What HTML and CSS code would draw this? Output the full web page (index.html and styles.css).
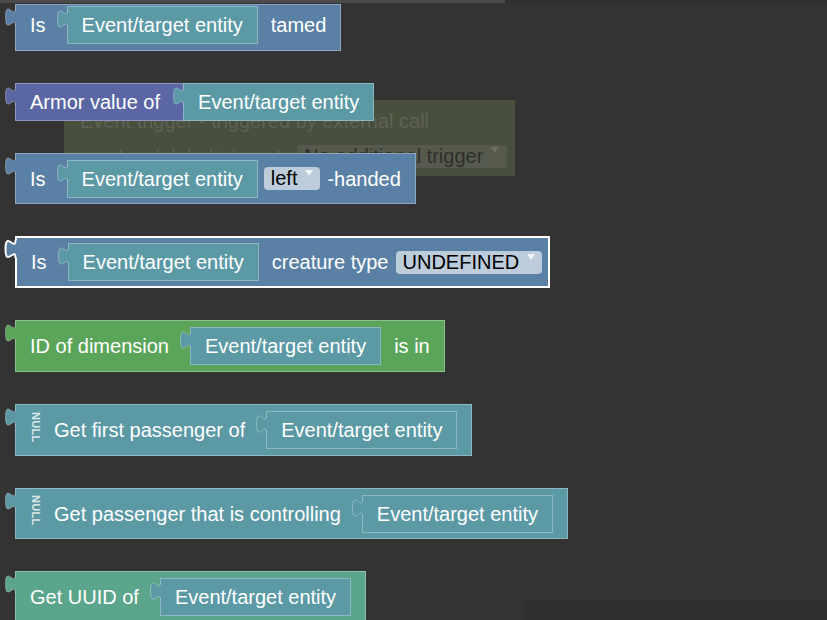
FILE: index.html
```html
<!DOCTYPE html>
<html>
<head>
<meta charset="utf-8">
<link rel="stylesheet" href="styles.css">
</head>
<body>
<div class="scroll-top"><div class="thumb"></div></div>
<div class="scroll-corner"></div>

<div class="ghost">
  <div class="ghost-row">Event trigger - triggered by external call</div>
  <div class="ghost-row two">
    <span>number (global trigger)</span>
    <span class="ghost-dd">No additional trigger<svg class="arrow" width="8" height="6" viewBox="0 0 8 6"><path d="M0 0H8L4 6Z"/></svg></span>
  </div>
</div>

<div class="stack">
  <div class="blk c-blue b1">
    <svg class="tab" width="14" height="26" viewBox="0 0 14 26"><path class="tf" d="M10.5 4c0 12-10-10-10 9s10-3 10 9H13V4Z"/><path class="ts" d="M10.5 4c0 12-10-10-10 9s10-3 10 9"/></svg>
    <span class="lbl">Is</span>
    <div class="inp"><svg class="tab" width="14" height="26" viewBox="0 0 14 26"><path class="tf" d="M10.5 4c0 12-10-10-10 9s10-3 10 9H13V4Z"/><path class="ts" d="M10.5 4c0 12-10-10-10 9s10-3 10 9"/></svg>Event/target entity</div>
    <span class="lbl">tamed</span>
  </div>

  <div class="blk c-purple b2">
    <svg class="tab" width="14" height="26" viewBox="0 0 14 26"><path class="tf" d="M10.5 4c0 12-10-10-10 9s10-3 10 9H13V4Z"/><path class="ts" d="M10.5 4c0 12-10-10-10 9s10-3 10 9"/></svg>
    <span class="lbl">Armor value of</span>
    <div class="inp last"><svg class="tab" width="14" height="26" viewBox="0 0 14 26"><path class="tf" d="M10.5 4c0 12-10-10-10 9s10-3 10 9H13V4Z"/><path class="ts" d="M10.5 4c0 12-10-10-10 9s10-3 10 9"/></svg>Event/target entity</div>
  </div>

  <div class="blk c-blue b3">
    <svg class="tab" width="14" height="26" viewBox="0 0 14 26"><path class="tf" d="M10.5 4c0 12-10-10-10 9s10-3 10 9H13V4Z"/><path class="ts" d="M10.5 4c0 12-10-10-10 9s10-3 10 9"/></svg>
    <span class="lbl">Is</span>
    <div class="inp tight"><svg class="tab" width="14" height="26" viewBox="0 0 14 26"><path class="tf" d="M10.5 4c0 12-10-10-10 9s10-3 10 9H13V4Z"/><path class="ts" d="M10.5 4c0 12-10-10-10 9s10-3 10 9"/></svg>Event/target entity</div>
    <span class="dd">left<svg class="arrow" width="8" height="6" viewBox="0 0 8 6"><path d="M0 0H8L4 6Z"/></svg></span>
    <span class="lbl after-dd">-handed</span>
  </div>

  <div class="blk c-blue b4 selected">
    <svg class="tab" width="14" height="26" viewBox="0 0 14 26"><path class="tf" d="M10.5 4c0 12-10-10-10 9s10-3 10 9H13V4Z"/><path class="ts" d="M10.5 4c0 12-10-10-10 9s10-3 10 9"/></svg>
    <span class="lbl">Is</span>
    <div class="inp"><svg class="tab" width="14" height="26" viewBox="0 0 14 26"><path class="tf" d="M10.5 4c0 12-10-10-10 9s10-3 10 9H13V4Z"/><path class="ts" d="M10.5 4c0 12-10-10-10 9s10-3 10 9"/></svg>Event/target entity</div>
    <span class="lbl">creature type</span>
    <span class="dd gap">UNDEFINED<svg class="arrow" width="8" height="6" viewBox="0 0 8 6"><path d="M0 0H8L4 6Z"/></svg></span>
  </div>

  <div class="blk c-green b5">
    <svg class="tab" width="14" height="26" viewBox="0 0 14 26"><path class="tf" d="M10.5 4c0 12-10-10-10 9s10-3 10 9H13V4Z"/><path class="ts" d="M10.5 4c0 12-10-10-10 9s10-3 10 9"/></svg>
    <span class="lbl">ID of dimension</span>
    <div class="inp"><svg class="tab" width="14" height="26" viewBox="0 0 14 26"><path class="tf" d="M10.5 4c0 12-10-10-10 9s10-3 10 9H13V4Z"/><path class="ts" d="M10.5 4c0 12-10-10-10 9s10-3 10 9"/></svg>Event/target entity</div>
    <span class="lbl">is in</span>
  </div>

  <div class="blk c-teal b6">
    <svg class="tab" width="14" height="26" viewBox="0 0 14 26"><path class="tf" d="M10.5 4c0 12-10-10-10 9s10-3 10 9H13V4Z"/><path class="ts" d="M10.5 4c0 12-10-10-10 9s10-3 10 9"/></svg>
    <span class="null">NULL</span>
    <span class="lbl">Get first passenger of</span>
    <div class="inp empty last-pad"><svg class="tab" width="14" height="26" viewBox="0 0 14 26"><path class="tf" d="M10.5 4c0 12-10-10-10 9s10-3 10 9H13V4Z"/><path class="ts" d="M10.5 4c0 12-10-10-10 9s10-3 10 9"/></svg>Event/target entity</div>
  </div>

  <div class="blk c-teal b7">
    <svg class="tab" width="14" height="26" viewBox="0 0 14 26"><path class="tf" d="M10.5 4c0 12-10-10-10 9s10-3 10 9H13V4Z"/><path class="ts" d="M10.5 4c0 12-10-10-10 9s10-3 10 9"/></svg>
    <span class="null">NULL</span>
    <span class="lbl">Get passenger that is controlling</span>
    <div class="inp empty last-pad"><svg class="tab" width="14" height="26" viewBox="0 0 14 26"><path class="tf" d="M10.5 4c0 12-10-10-10 9s10-3 10 9H13V4Z"/><path class="ts" d="M10.5 4c0 12-10-10-10 9s10-3 10 9"/></svg>Event/target entity</div>
  </div>

  <div class="blk c-mint b8">
    <svg class="tab" width="14" height="26" viewBox="0 0 14 26"><path class="tf" d="M10.5 4c0 12-10-10-10 9s10-3 10 9H13V4Z"/><path class="ts" d="M10.5 4c0 12-10-10-10 9s10-3 10 9"/></svg>
    <span class="lbl">Get UUID of</span>
    <div class="inp last-pad"><svg class="tab" width="14" height="26" viewBox="0 0 14 26"><path class="tf" d="M10.5 4c0 12-10-10-10 9s10-3 10 9H13V4Z"/><path class="ts" d="M10.5 4c0 12-10-10-10 9s10-3 10 9"/></svg>Event/target entity</div>
  </div>
</div>
</body>
</html>
```
FILE: styles.css
```css
* { box-sizing: border-box; }
html, body { margin: 0; }
body {
  width: 827px;
  height: 620px;
  overflow: hidden;
  position: relative;
  background: #333333;
  font-family: "Liberation Sans", Arial, sans-serif;
  font-size: 20px;
  color: #ffffff;
}

/* scrollbars overlaying the canvas */
.scroll-top {
  position: absolute; left: 0; top: 0; width: 827px; height: 3px;
  background: #2f2f2f; z-index: 3;
}
.scroll-top .thumb { width: 505px; height: 3px; background: #4a4a4a; }
.scroll-corner {
  position: absolute; left: 524px; top: 601px; width: 303px; height: 19px;
  background: #2f2f2f; z-index: 3;
}

/* faded background block */
.ghost {
  position: absolute; left: 64px; top: 100px; width: 451px; height: 76px;
  background: #494f3d; color: #5e6253;
  padding: 7px 0 0 16px;
  z-index: 0;
}
.ghost-row { line-height: 28px; white-space: nowrap; }
.ghost-row.two { display: flex; align-items: center; margin-top: 10px; height: 23px; }
.ghost-dd {
  display: flex; align-items: flex-start;
  height: 23px; line-height: 23px;
  margin-left: 15px; padding: 0 8px 0 7px;
  background: #565a4c; color: #2e3029; border-radius: 4px;
}
.ghost-dd .arrow { margin: 2px 0 0 8px; fill: #6c705f; }

/* blocks */
.stack {
  position: relative; z-index: 1;
  display: flex; flex-direction: column; align-items: flex-start;
  gap: 32px;
  padding: 4px 0 0 15px;
}
.blk {
  --c: #5b80a5;
  position: relative;
  display: flex; align-items: center;
  background: var(--c);
  border: 1px solid rgba(255,255,255,0.3);
  padding: 0 14px;
  white-space: nowrap;
}
.c-blue { --c: #5b80a5; }
.c-purple { --c: #5b67a5; }
.c-green { --c: #5ba55b; }
.c-teal { --c: #5b99a5; }
.c-mint { --c: #5ba58c; }

.tab { position: absolute; left: -11px; top: -1px; overflow: visible; }
.tab .tf { fill: var(--c); }
.tab .ts { fill: none; stroke: rgba(255,255,255,0.3); stroke-width: 1; }

.lbl { line-height: 38px; }

.inp {
  --c: #5b99a5;
  position: relative;
  height: 38px; line-height: 36px;
  padding: 0 14px;
  background: var(--c);
  border: 1px solid rgba(255,255,255,0.3);
  margin: 0 13px 0 21px;
  flex: none;
}
.inp.tight { margin-right: 6px; }
.inp.last { margin: 0 -1px 0 23px; }
.inp.last-pad { margin-right: 0; }
.inp.empty { background: transparent; }
.inp.empty .tab .tf { fill: #5b99a5; }

.dd {
  display: flex; align-items: flex-start;
  height: 23px; line-height: 23px;
  padding: 0 7px 0 7px;
  background: #bdccdb; color: #000000;
  border-radius: 4px;
  flex: none;
}
.dd.gap { margin-left: 7px; }
.dd .arrow { margin: 3px 0 0 8px; fill: #eef3f8; }
.after-dd { margin-left: 7px; }

.null {
  writing-mode: vertical-rl;
  font-size: 11px; font-weight: bold;
  line-height: 10px;
  letter-spacing: 0.3px;
  color: #dbe7ea;
  margin: -6px 13px 0 1px;
}

.b1 { height: 47px; align-items: flex-start; padding-top: 1px; }
.b2 { height: 38px; padding-right: 0; }
.b3 { height: 51px; }
.b4 { height: 52px; }
.b5 { height: 52px; }
.b6 { height: 52px; }
.b7 { height: 51px; }
.b8 { height: 52px; }

.selected { border: 2px solid #ffffff; padding: 0 6px 0 14px; }
.selected > .tab { left: -12px; top: -2px; }
.selected > .tab .ts { stroke: #ffffff; stroke-width: 2; }
```
